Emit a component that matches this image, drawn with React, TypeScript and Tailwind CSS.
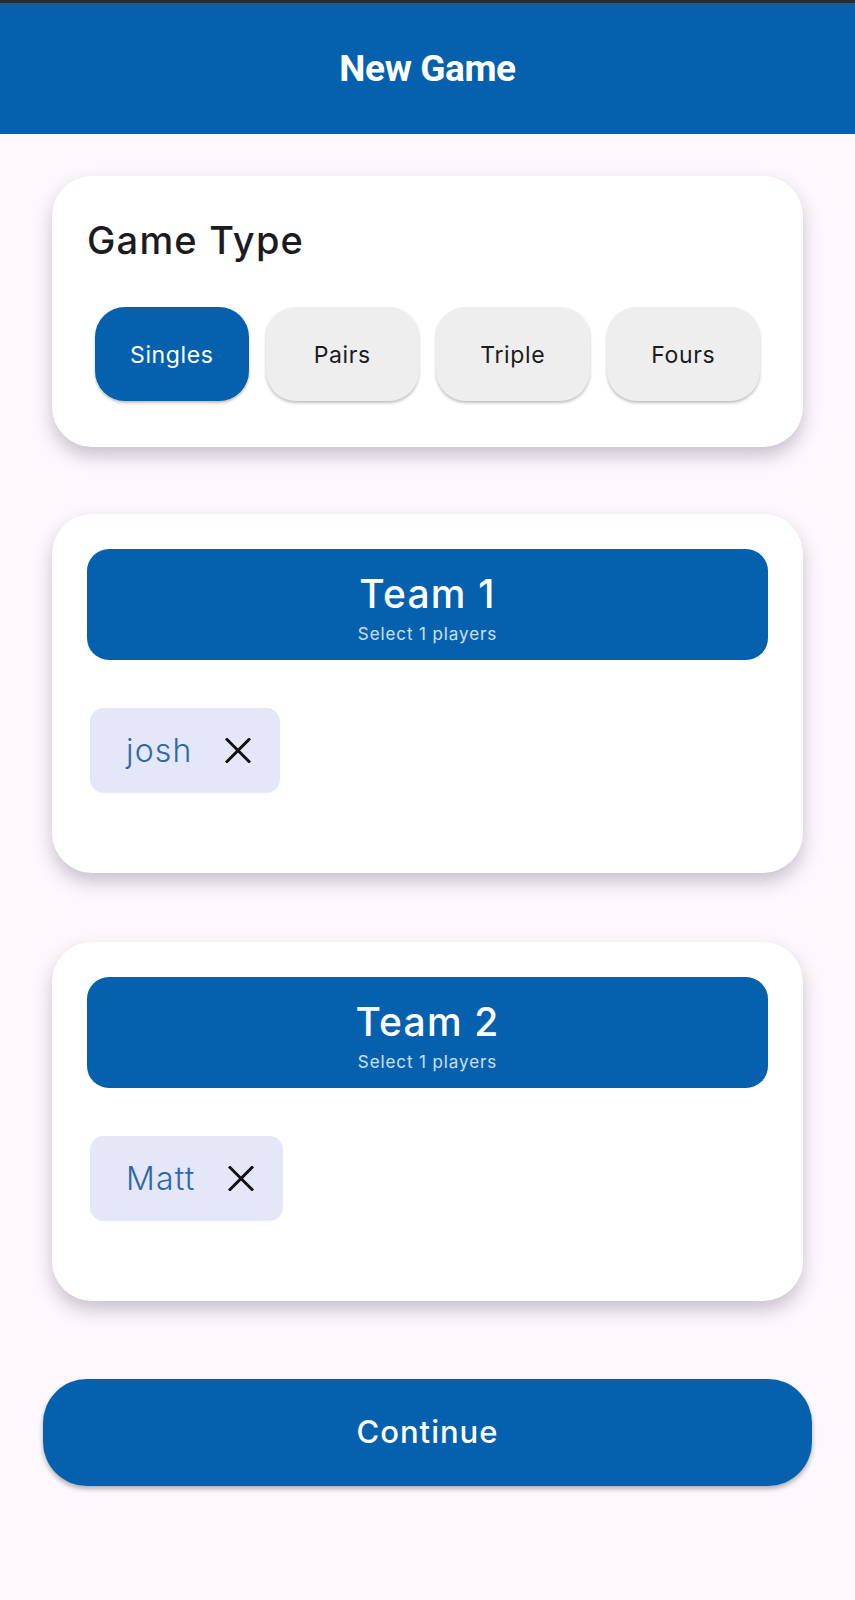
import React, { useState } from 'react';

const GAME_TYPES = ['Singles', 'Pairs', 'Triple', 'Fours'];

const CloseIcon: React.FC = () => (
  <svg width="26" height="25" viewBox="0 0 26 25" fill="none" stroke="#111" strokeWidth="3" strokeLinecap="square">
    <path d="M2 1.5 L24 23.5 M24 1.5 L2 23.5" />
  </svg>
);

const TeamCard: React.FC<{ title: string; players: string[] }> = ({ title, players }) => (
  <section className="mx-[9px] rounded-[40px] bg-white px-[35px] pt-[35px] pb-[80px] shadow-[0_9px_18px_rgba(70,50,80,0.28)]">
    <div className="flex h-[111px] flex-col items-center rounded-[22px] bg-[#0561ad] pt-[25px] text-white">
      <h2 className="text-[39px] leading-none font-medium tracking-[1.2px]">{title}</h2>
      <p className="mt-[13px] text-[17px] leading-none tracking-[0.9px] text-white/80">Select 1 players</p>
    </div>
    <div className="mt-[48px] ml-[3px] flex gap-3">
      {players.map((p) => (
        <div key={p} className="flex h-[85px] items-center gap-[32px] rounded-[14px] bg-[#e3e7f7] pr-[29px] pl-[36px]">
          <span className="text-[32px] leading-none font-light tracking-[1.2px] text-[#2f68a8]">{p}</span>
          <CloseIcon />
        </div>
      ))}
    </div>
  </section>
);

const App: React.FC = () => {
  const [gameType, setGameType] = useState('Singles');

  return (
    <div className="min-h-screen w-full bg-[#fdf8fd] font-['Inter',sans-serif] text-[#1c1b1f]">
      <header className="flex h-[134px] items-center justify-center border-t-[3px] border-[#2a2d33] bg-[#0561ad]">
        <h1 className="font-['Roboto',sans-serif] text-[37px] font-bold tracking-[-0.4px] text-white">New Game</h1>
      </header>

      <main className="flex flex-col px-[43px] pt-[42px] pb-[100px]">
        <section className="mx-[9px] rounded-[40px] bg-white px-[35px] pt-[45px] pb-[46px] shadow-[0_9px_18px_rgba(70,50,80,0.28)]">
          <h2 className="text-[38px] leading-none font-medium tracking-[1.2px]">Game Type</h2>
          <div className="mt-[48px] grid grid-cols-4 gap-[17px] px-[8px]">
            {GAME_TYPES.map((t) => (
              <button
                key={t}
                onClick={() => setGameType(t)}
                className={
                  t === gameType
                    ? 'h-[94px] rounded-[30px] bg-[#0561ad] pt-[3px] text-[23px] tracking-[0.6px] text-white shadow-[0_2px_3px_rgba(0,0,0,0.25)]'
                    : 'h-[94px] rounded-[30px] bg-[#eeeeee] pt-[3px] text-[23px] tracking-[0.6px] text-[#1c1b1f] shadow-[0_2px_3px_rgba(0,0,0,0.25)]'
                }
              >
                {t}
              </button>
            ))}
          </div>
        </section>

        <div className="mt-[67px]">
          <TeamCard title="Team 1" players={['josh']} />
        </div>
        <div className="mt-[69px]">
          <TeamCard title="Team 2" players={['Matt']} />
        </div>

        <button className="mt-[78px] h-[107px] rounded-[44px] bg-[#0561ad] text-[31px] font-medium tracking-[1px] text-white shadow-[0_3px_5px_rgba(0,0,0,0.3)]">
          Continue
        </button>
      </main>
    </div>
  );
};

export default App;
